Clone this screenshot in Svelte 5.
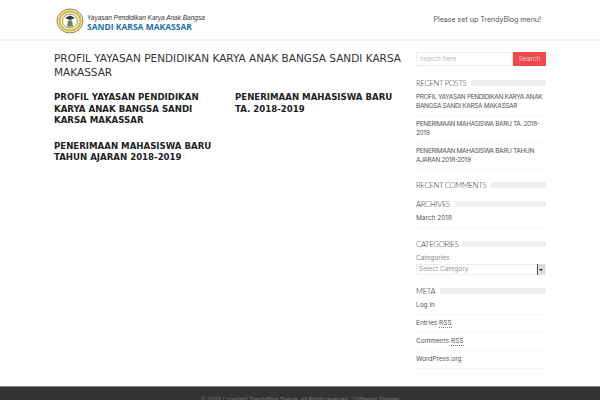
<script>
  const posts = [
    "PROFIL YAYASAN PENDIDIKAN KARYA ANAK BANGSA SANDI KARSA MAKASSAR",
    "PENERIMAAN MAHASISWA BARU TA. 2018-2019",
    "PENERIMAAN MAHASISWA BARU TAHUN AJARAN 2018-2019"
  ];
</script>

<header class="header">
  <div class="logo">
    <svg width="30" height="26" viewBox="0 0 30 26">
      <ellipse cx="15" cy="13" rx="13" ry="12" fill="#f3eed2" stroke="#8a8658" stroke-width="1" />
      <ellipse cx="15" cy="13" rx="10.5" ry="9.6" fill="none" stroke="#d9b93f" stroke-width="2" />
      <ellipse cx="15" cy="13" rx="7.5" ry="6.8" fill="#fff" stroke="#77905a" stroke-width="0.8" />
      <path d="M10 10 L15 7.5 L20 10 L15 12 Z" fill="#333" />
      <path d="M13 12.5 h4 l1 6 h-6 Z" fill="#6f7f58" />
    </svg>
    <div class="logo-text">
      <span class="tagline">Yayasan Pendidikan Karya Anak Bangsa</span>
      <span class="name">SANDI KARSA MAKASSAR</span>
    </div>
  </div>
  <div class="menu">Please set up TrendyBlog menu!</div>
</header>

<div class="page">
  <main class="main">
    <h1>PROFIL YAYASAN PENDIDIKAN KARYA ANAK BANGSA SANDI KARSA MAKASSAR</h1>
    <div class="posts">
      <h2>PROFIL YAYASAN PENDIDIKAN KARYA ANAK BANGSA SANDI KARSA MAKASSAR</h2>
      <h2>PENERIMAAN MAHASISWA BARU TA. 2018-2019</h2>
      <h2>PENERIMAAN MAHASISWA BARU TAHUN AJARAN 2018-2019</h2>
    </div>
  </main>

  <aside class="sidebar">
    <div class="search">
      <span class="search-input">search here</span>
      <span class="search-btn">Search</span>
    </div>

    <h3 class="recent"><span>RECENT POSTS</span></h3>
    <ul class="caps">
      {#each posts as post}
        <li>{post}</li>
      {/each}
    </ul>

    <h3 class="comments"><span>RECENT COMMENTS</span></h3>

    <h3><span>ARCHIVES</span></h3>
    <ul>
      <li>March 2018</li>
    </ul>

    <h3 class="cat"><span>CATEGORIES</span></h3>
    <div class="cat-label">Categories</div>
    <div class="select">
      <span>Select Category</span>
      <i class="arrow"></i>
    </div>

    <h3 class="meta"><span>META</span></h3>
    <ul>
      <li>Log in</li>
      <li>Entries <abbr>RSS</abbr></li>
      <li>Comments <abbr>RSS</abbr></li>
      <li>WordPress.org</li>
    </ul>
  </aside>
</div>

<footer class="footer">
  © 2018 Copyright TrendyBlog Theme. All Rights reserved. | Different Themes
</footer>

<style>
  :global(body) {
    margin: 0;
    background: #fff;
    overflow: hidden;
  }
  .header {
    height: 39px;
    border-bottom: 2px solid #f2f2f2;
    padding: 0 59px 0 55px;
    display: flex;
    align-items: center;
    justify-content: space-between;
  }
  .logo {
    display: flex;
    align-items: center;
    margin-top: 3px;
  }
  .logo-text {
    display: flex;
    flex-direction: column;
    margin: 2px 0 0 2px;
  }
  .tagline {
    font: italic 6.5px/9px "Liberation Sans", sans-serif;
    color: #333;
  }
  .name {
    font: bold 8.5px/10px "Open Sans", sans-serif;
    color: #1c6fa8;
  }
  .menu {
    font: 7.05px "Inter", sans-serif;
    color: #555;
  }
  .page {
    display: flex;
    height: 345px;
    padding: 0 54px;
    justify-content: space-between;
  }
  .main {
    width: 350px;
  }
  h1 {
    margin: 10px 0 0;
    font: 400 10.5px/14px "DejaVu Sans", sans-serif;
    color: #333;
  }
  .posts {
    display: grid;
    grid-template-columns: 165px 160px;
    column-gap: 16px;
    margin-top: 13px;
    row-gap: 14px;
  }
  h2 {
    margin: 0;
    font: bold 8.6px/11.5px "DejaVu Sans", sans-serif;
    color: #222;
  }
  .sidebar {
    width: 130px;
    padding-top: 11px;
    font: 6.5px/9px "Inter", sans-serif;
    color: #555;
  }
  .search {
    display: flex;
    height: 14px;
  }
  .search-input {
    flex: 1;
    border: 1px solid #eee;
    color: #bbb;
    padding-left: 3px;
    line-height: 12px;
  }
  .search-btn {
    width: 33px;
    background: #f0484f;
    color: #f8c8c8;
    text-align: center;
    line-height: 14px;
  }
  h3 {
    margin: 9px 0 0;
    font: 300 7.7px/10px "Lato", sans-serif;
    letter-spacing: -0.3px;
    color: #333;
    display: flex;
    align-items: center;
  }
  h3::after {
    content: "";
    flex: 1;
    height: 6px;
    background: #eee;
    margin-left: 5px;
  }
  .recent {
    margin-top: 12px;
  }
  .comments {
    margin-top: 10px;
  }
  .cat {
    margin-top: 11px;
  }
  .meta {
    margin-top: 11px;
  }
  ul {
    list-style: none;
    margin: 5px 0 0;
    padding: 0;
    width: 129px;
  }
  .caps {
    letter-spacing: -0.35px;
  }
  li {
    padding-bottom: 4px;
    margin-bottom: 4px;
    border-bottom: 1px solid #f7f7f7;
  }
  abbr {
    border-bottom: 1px dotted #777;
  }
  .cat-label {
    margin-top: 5px;
    color: #888;
  }
  .select {
    height: 9px;
    margin-top: 1px;
    border: 1px solid #eee;
    color: #999;
    padding-left: 2px;
    display: flex;
    justify-content: space-between;
    align-items: center;
  }
  .arrow {
    width: 7px;
    height: 11px;
    background: #ddd;
    border-left: 1px solid #555;
    position: relative;
  }
  .arrow::after {
    content: "";
    position: absolute;
    left: 1px;
    top: 5px;
    border: 2px solid transparent;
    border-top-color: #222;
  }
  .footer {
    height: 14px;
    background: #333;
    border-top: 1px solid #888;
    color: #777;
    font: 5.9px/23px "Lato", sans-serif;
    text-align: center;
    box-sizing: border-box;
    overflow: hidden;
  }
</style>
